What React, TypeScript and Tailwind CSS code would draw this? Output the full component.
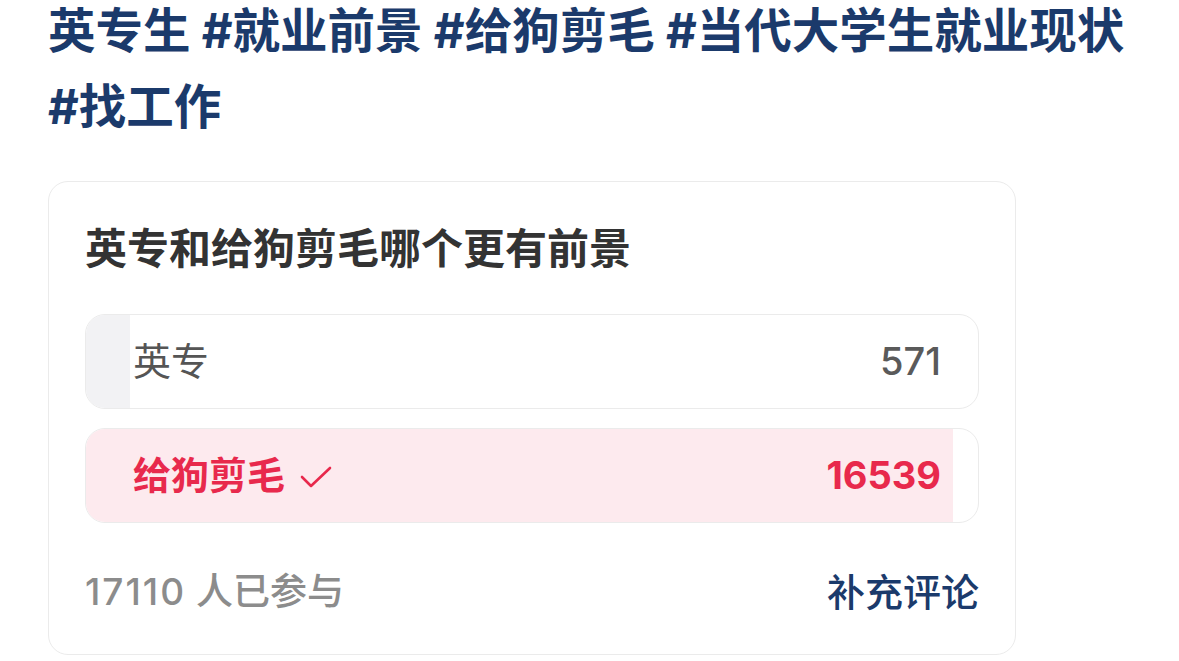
const tags = ["英专生", "#就业前景", "#给狗剪毛", "#当代大学生就业现状", "#找工作"];

const options = [
  { label: "英专", votes: 571, picked: false },
  { label: "给狗剪毛", votes: 16539, picked: true },
];

const total = 17110;

const font = { fontFamily: '"Inter", "Noto Sans CJK SC", sans-serif' };

function Check() {
  return (
    <svg width="34" height="26" viewBox="0 0 34 26" fill="none" className="ml-[14px] mt-[2px]">
      <polyline points="3,13 12,22 31,4" stroke="#e8294c" strokeWidth="2.6" strokeLinecap="round" strokeLinejoin="round" />
    </svg>
  );
}

function OptionRow({ label, votes, picked }: { label: string; votes: number; picked: boolean }) {
  // keep a sliver of fill visible even for tiny shares
  const pct = Math.max((votes / total) * 100 + 0.5, 4.9);
  return (
    <div className="relative h-[95px] rounded-[20px] border border-[#ebebeb] overflow-hidden flex items-center justify-between pl-[47px] pr-[37px]">
      <div
        className={picked ? "absolute left-0 top-0 bottom-0 bg-[#fdeaee]" : "absolute left-0 top-0 bottom-0 bg-[#f2f2f4]"}
        style={{ width: `${pct}%` }}
      />
      <div className="relative flex items-center">
        <span className={picked ? "text-[38px] font-bold text-[#e8294c]" : "text-[38px] text-[#555555]"}>{label}</span>
        {picked && <Check />}
      </div>
      <span className={picked ? "relative text-[38px] font-bold text-[#e8294c]" : "relative text-[38px] font-medium text-[#5a5a5a]"}>
        {votes}
      </span>
    </div>
  );
}

export default function App() {
  return (
    <div className="min-h-screen bg-white pl-[48px] pr-[30px]" style={font}>
      <h1 className="-mt-[7px] text-[47.5px] leading-[76px] font-bold text-[#1b3a6b]">
        {tags.map((t, i) => (
          <span key={t}>
            <span className="whitespace-nowrap">{t}</span>
            {i < tags.length - 1 && " "}
          </span>
        ))}
      </h1>

      <div className="mt-[36px] w-[968px] rounded-[20px] border border-[#ebebeb] px-[36px] pt-[41px] pb-[38px]">
        <h2 className="text-[42px] leading-[52px] font-bold text-[#333333]">英专和给狗剪毛哪个更有前景</h2>

        <div className="mt-[39px] flex flex-col gap-[19px]">
          {options.map((o) => (
            <OptionRow key={o.label} {...o} />
          ))}
        </div>

        <div className="mt-[45px] flex items-center justify-between leading-[48px]">
          <span className="text-[37px] font-medium text-[#8c8c8c]">
            <span className="tracking-[2px]">{total}</span> 人已参与
          </span>
          <span className="text-[38px] font-medium text-[#1b3a6b]">补充评论</span>
        </div>
      </div>
    </div>
  );
}
